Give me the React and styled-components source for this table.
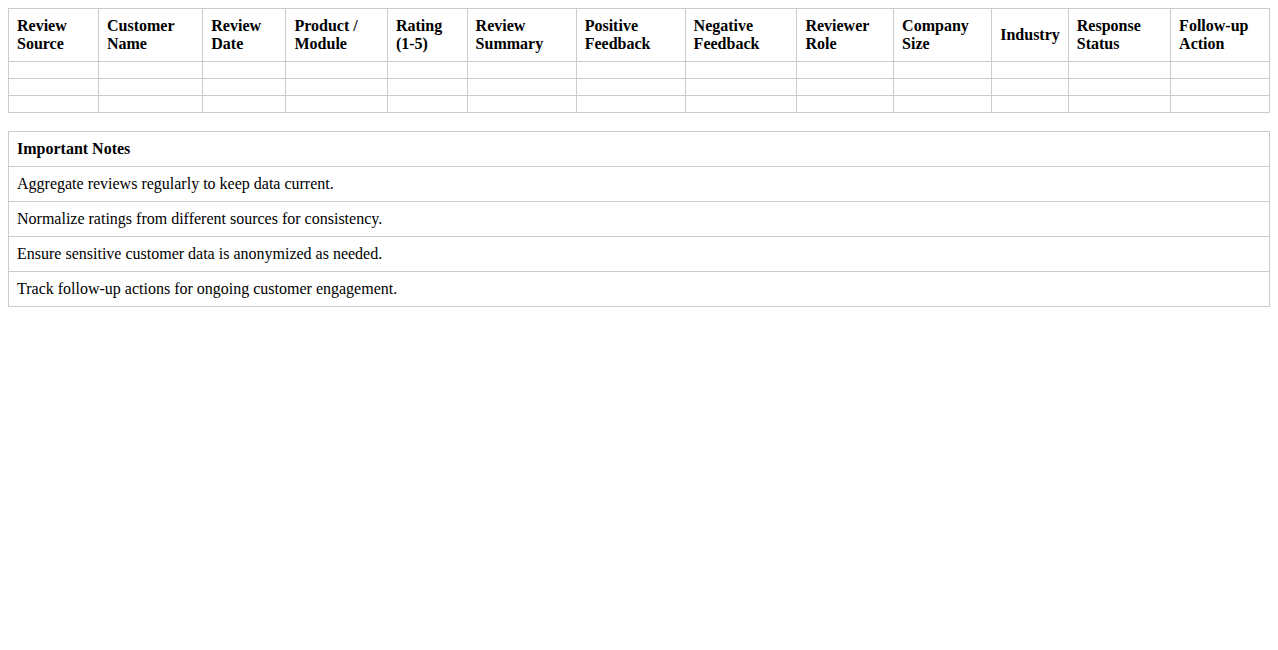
import React from 'react'
import styled, { createGlobalStyle } from 'styled-components'

const GlobalStyle = createGlobalStyle`
    body {
        margin: 8px;
        font-family: "Liberation Serif", "Times New Roman", serif;
        font-size: 16px;
        color: #000;
        background: #fff;
    }
`

const Table = styled.table`
    width: 100%;
    border-collapse: collapse;
    margin-bottom: ${props => props.gap || 0}px;
`

const Th = styled.th`
    border: 1px solid #ccc;
    padding: 8px;
    text-align: left;
    vertical-align: middle;
    font-weight: bold;
`

const Td = styled.td`
    border: 1px solid #ccc;
    padding: 8px;
    text-align: left;
`

const columns = [
    'Review Source',
    'Customer Name',
    'Review Date',
    'Product / Module',
    'Rating (1-5)',
    'Review Summary',
    'Positive Feedback',
    'Negative Feedback',
    'Reviewer Role',
    'Company Size',
    'Industry',
    'Response Status',
    'Follow-up Action',
]

const notes = [
    'Aggregate reviews regularly to keep data current.',
    'Normalize ratings from different sources for consistency.',
    'Ensure sensitive customer data is anonymized as needed.',
    'Track follow-up actions for ongoing customer engagement.',
]

const App = () => {
    return (
        <>
            <GlobalStyle />
            <Table gap={18}>
                <thead>
                    <tr>
                        {columns.map(col => <Th key={col}>{col}</Th>)}
                    </tr>
                </thead>
                <tbody>
                    {[0, 1, 2].map(row => (
                        <tr key={row}>
                            {columns.map(col => <Td key={col}></Td>)}
                        </tr>
                    ))}
                </tbody>
            </Table>
            <Table>
                <thead>
                    <tr><Th>Important Notes</Th></tr>
                </thead>
                <tbody>
                    {notes.map(note => (
                        <tr key={note}><Td>{note}</Td></tr>
                    ))}
                </tbody>
            </Table>
        </>
    )
}

export default App
